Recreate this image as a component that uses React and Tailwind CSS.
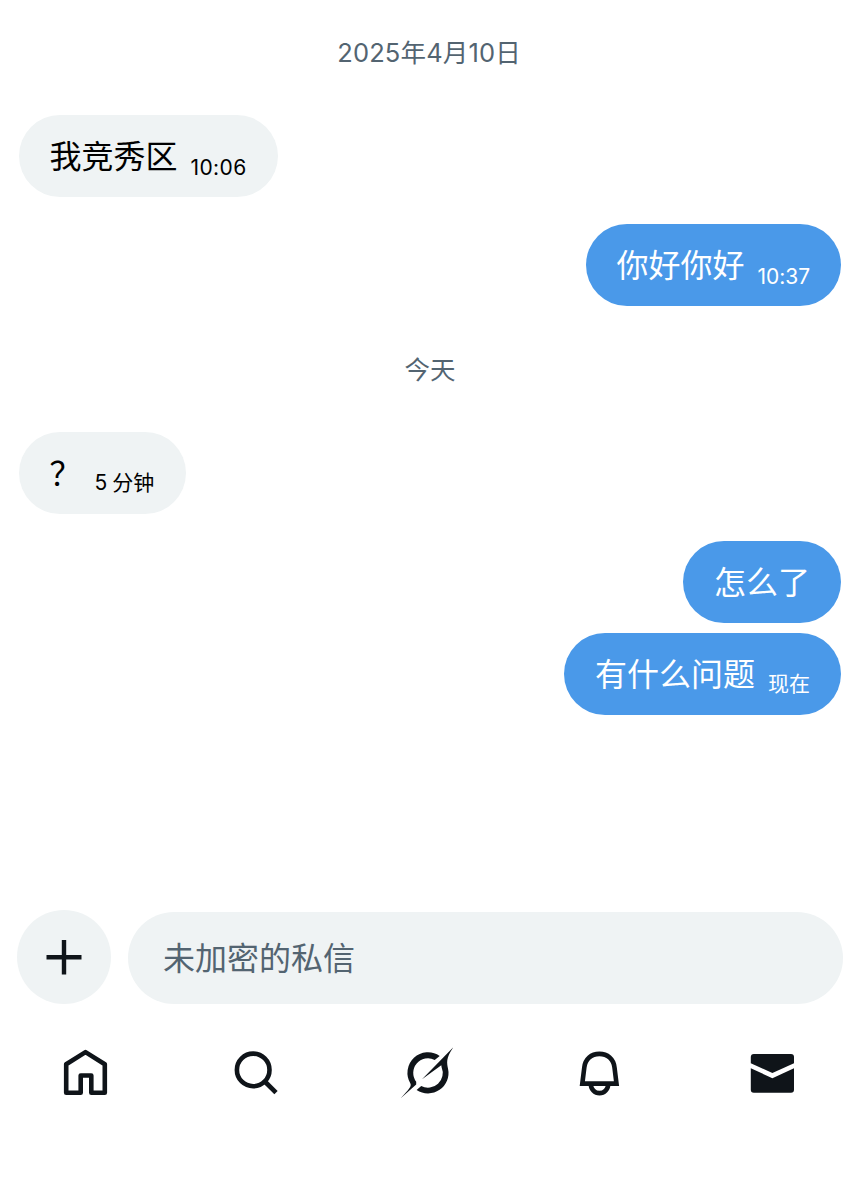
import React from 'react';

const BUBBLE = 'flex h-[82.5px] items-center gap-[13px] rounded-[41px]';

function DateLabel({ children }) {
  return (
    <div className="flex h-[38px] items-center justify-center pt-[2px] text-[25.5px] text-[#536471]">
      {children}
    </div>
  );
}

function Message({ text, time, mine, stampClass = '', className = '' }) {
  return (
    <div className={`flex ${mine ? 'justify-end' : 'justify-start'} ${className}`}>
      <div className={`${BUBBLE} ${mine ? 'bg-[#4a99e9] pr-[31px] pl-[30.5px] text-white' : 'bg-[#eff3f4] pr-[31.5px] pl-[30.5px] text-black'}`}>
        <span className="pt-[2.5px] text-[32px] leading-[46px] whitespace-nowrap">{text}</span>
        {time && (
          <span className={`pt-[23.5px] text-[21px] leading-[30px] whitespace-nowrap ${stampClass}`}>{time}</span>
        )}
      </div>
    </div>
  );
}

function NavButton({ label, children }) {
  return (
    <button aria-label={label} className="flex w-[172px] justify-center">
      <svg width="60" height="60" viewBox="0 0 60 60" fill="none" stroke="#0f1419" strokeWidth="4.6">
        {children}
      </svg>
    </button>
  );
}

export default function App() {
  return (
    <div className="flex h-[1199px] w-[860px] flex-col bg-white font-['Inter','Noto_Sans_CJK_SC',sans-serif]">

      {/* Messages */}
      <main className="flex h-[910px] flex-col pt-[33px] pr-[19px] pl-[19px]">
        <div className="pr-[2px] tracking-[0.15px]">
          <DateLabel>2025年4月10日</DateLabel>
        </div>
        <Message className="mt-[43.5px]" text="我竞秀区" time="10:06" stampClass="tracking-[0.4px]" />
        <Message className="mt-[26.5px]" text="你好你好" time="10:37" stampClass="tracking-[-0.05px]" mine />
        <div className="mt-[44px]">
          <DateLabel>今天</DateLabel>
        </div>
        <Message className="mt-[43.5px]" text="？" time="5 分钟" stampClass="-mt-[4px] [word-spacing:-1px]" />
        <Message className="mt-[26.5px]" text="怎么了" mine />
        <Message className="mt-[9.5px]" text="有什么问题" time="现在" stampClass="-mt-[4px]" mine />
      </main>

      {/* Composer */}
      <div className="flex h-[94px] items-center gap-[17px] pr-[17px] pl-[17px]">
        <button aria-label="添加" className="flex size-[94px] shrink-0 items-center justify-center rounded-full bg-[#eff3f4]">
          <svg width="36" height="36" viewBox="0 0 36 36" fill="none" stroke="#0f1419" strokeWidth="4.4">
            <path d="M18 1V35.5M0.5 18.3H35.5" />
          </svg>
        </button>
        <div className="mt-px flex h-[92px] flex-1 items-center rounded-full bg-[#eff3f4] px-[35px] pt-[3px] text-[32px] text-[#536471]">
          未加密的私信
        </div>
      </div>

      {/* Bottom tabs */}
      <nav className="mt-[38px] flex">
        <NavButton label="主页">
          <path strokeLinejoin="round" d="M10.2 50.8V22.3L29.5 10.1L48.8 22.3V50.8H35.3V33.5H24.7V50.8Z" />
        </NavButton>
        <NavButton label="搜索">
          <circle cx="25.2" cy="27.9" r="16.3" />
          <path d="M36.8 39.5L48 50.7" />
        </NavButton>
        <NavButton label="Grok">
          <g fill="#0f1419" stroke="none">
            <path d="M39.7 14A20.5 20.5 0 0 0 10.4 41.4C11.6 44.2 9.5 46.6 0.7 56.3L16.2 42.4V39.8A14.7 14.7 0 0 1 34.7 17.9Z" />
            <path d="M53.3 5.3L22 37.3L41.3 23.3L41.6 25.2A14.8 14.8 0 0 1 21.2 44.1L16.6 48A20.5 20.5 0 0 0 48 26.5C47 21 45.5 16.5 53.3 5.3Z" />
          </g>
        </NavButton>
        <NavButton label="通知">
          <path d="M10.3 41.6L12.3 25.5C13.2 17 19.3 11.9 27.4 11.9S41.6 17 42.5 25.5L44.5 41.6Z" />
          <path d="M18.9 42.5A8.6 8.6 0 0 0 36.1 42.5" />
        </NavButton>
        <NavButton label="私信">
          <g fill="#0f1419" stroke="none">
            <path d="M6.8 21.2V15A3 3 0 0 1 9.8 12H47A3 3 0 0 1 50 15V21.2L28.4 31Z" />
            <path d="M6.8 26.2L28.4 36.2L50 26.2V47.7A3 3 0 0 1 47 50.7H9.8A3 3 0 0 1 6.8 47.7Z" />
          </g>
        </NavButton>
      </nav>
    </div>
  );
}
